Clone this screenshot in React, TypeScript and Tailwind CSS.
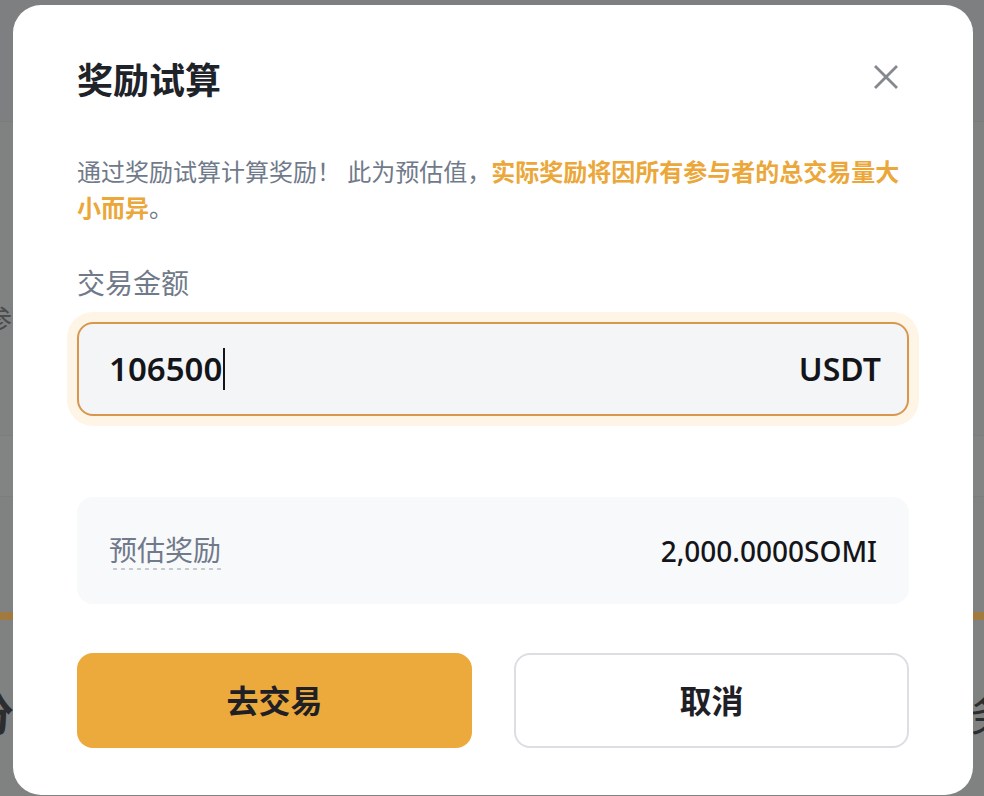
import React from "react";

const FONT = '"Noto Sans", "Noto Sans CJK SC", sans-serif';

function CloseIcon() {
  return (
    <svg width="24" height="24" viewBox="0 0 24 24" fill="none">
      <path d="M2 2L22 22M22 2L2 22" stroke="#85888E" strokeWidth="2.8" strokeLinecap="square" />
    </svg>
  );
}

export default function App() {
  return (
    <div className="relative h-[796px] w-full overflow-hidden bg-[#808181]" style={{ fontFamily: FONT }}>
      {/* dimmed page beneath the dialog */}
      <div className="flex flex-col">
        <div className="h-[122px] border-b border-[#7a7b7b] bg-[#7e7f80]" />
        <div className="flex h-[313px] items-center justify-between">
          <span className="ml-[-16px] mt-[80px] text-[28px] text-[#4b4c4e]">参</span>
          <span />
        </div>
        <div className="h-[62px] border-y border-[#7c7d7d] bg-[#828383]" />
        <div className="h-[115px]" />
        <div className="h-[8px] bg-[#a07a3f]" />
        <div className="flex h-[176px] items-start justify-between pt-[72px]">
          <span className="ml-[-30px] text-[44px] font-bold leading-none text-[#2c2d2f]">分</span>
          <span className="mr-[-30px] text-[44px] leading-none text-[#2c2d2f]">务</span>
        </div>
      </div>

      {/* overlay dialog */}
      <div className="absolute left-[13px] top-[5px] w-[960px] rounded-[28px] bg-white px-[64px] pb-[47px] pt-[48px]">
        <div className="flex items-start justify-between">
          <h1 className="text-[36px] font-bold leading-[56px] text-[#1E2329]">奖励试算</h1>
          <button className="mr-[11px] mt-[12px]">
            <CloseIcon />
          </button>
        </div>

        <p className="mt-[45px] text-[24px] leading-[36px] text-[#707A8A]">
          通过奖励试算计算奖励！ 此为预估值，
          <span className="font-bold text-[#EBA73A]">实际奖励将因所有参与者的总交易量大小而异</span>。
        </p>

        <div className="mt-[37px] text-[28px] leading-[40px] text-[#707A8A]">交易金额</div>

        <div className="mt-[19px] flex h-[94px] items-center justify-between rounded-[16px] border-2 border-[#D8974F] bg-[#F4F5F7] pl-[30px] pr-[26px] shadow-[0_0_0_10px_#FEF5E6]">
          <div className="flex items-center">
            <span className="text-[33px] font-semibold text-[#14151A]">106500</span>
            <span className="ml-[1px] inline-block h-[42px] w-[2px] bg-[#14151A]" />
          </div>
          <span className="text-[32px] font-semibold text-[#14151A]">USDT</span>
        </div>

        <div className="mt-[81px] flex h-[107px] items-center justify-between rounded-[16px] bg-[#F8F9FB] px-[32px]">
          <span className="bg-[linear-gradient(to_right,#C6C9CE_50%,transparent_50%)] bg-[length:8px_2px] bg-bottom bg-repeat-x pb-[2px] text-[28px] leading-[36px] text-[#707A8A]">
            预估奖励
          </span>
          <span className="text-[28px] font-medium text-[#14151A]">2,000.0000SOMI</span>
        </div>

        <div className="mt-[49px] grid grid-cols-2 gap-[42px]">
          <button className="h-[95px] rounded-[16px] bg-[#EDAA3C] text-[32px] font-bold text-[#1E2026]">去交易</button>
          <button className="h-[95px] rounded-[16px] border-2 border-[#DCDEE2] bg-white text-[32px] font-bold text-[#1E2026]">取消</button>
        </div>
      </div>
    </div>
  );
}
